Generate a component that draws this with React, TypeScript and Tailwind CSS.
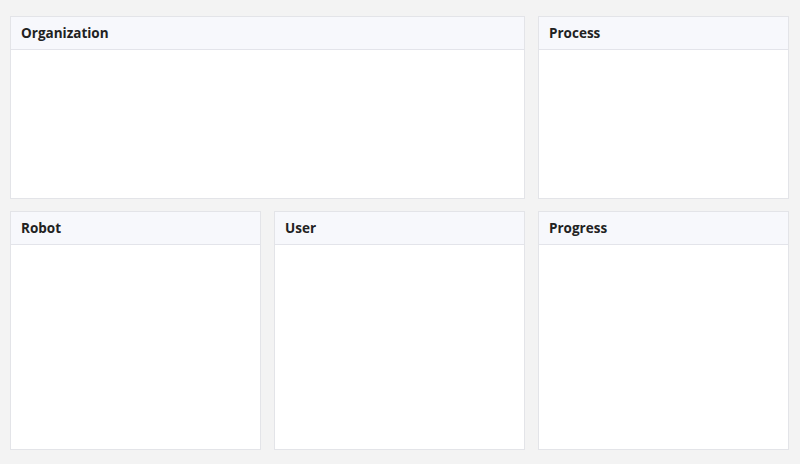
import React from 'react';

function Panel({ title }: { title: string }) {
    return (
        <div className="flex flex-col bg-white border border-[#e3e4e8] min-h-0">
            <div className="h-[33px] shrink-0 flex items-center px-[10px] pt-[2px] bg-[#f7f8fc] border-b border-[#e3e4ea]">
                <h2 className="text-[13.5px] font-bold text-[#222222] leading-none">{title}</h2>
            </div>
            <div className="flex-1" />
        </div>
    );
}

export default function App() {
    return (
        <div
            className="w-[800px] h-[464px] bg-[#f3f3f3] pl-[10px] pr-[11px] pt-[16px] pb-[14px]"
            style={{ fontFamily: '"Open Sans", "Noto Sans", sans-serif' }}
        >
            <div className="grid h-full grid-cols-3 grid-rows-[183px_1fr] gap-x-[13px] gap-y-[12px]">
                <div className="col-span-2 grid">
                    <Panel title="Organization" />
                </div>
                <Panel title="Process" />
                <Panel title="Robot" />
                <Panel title="User" />
                <Panel title="Progress" />
            </div>
        </div>
    );
}
